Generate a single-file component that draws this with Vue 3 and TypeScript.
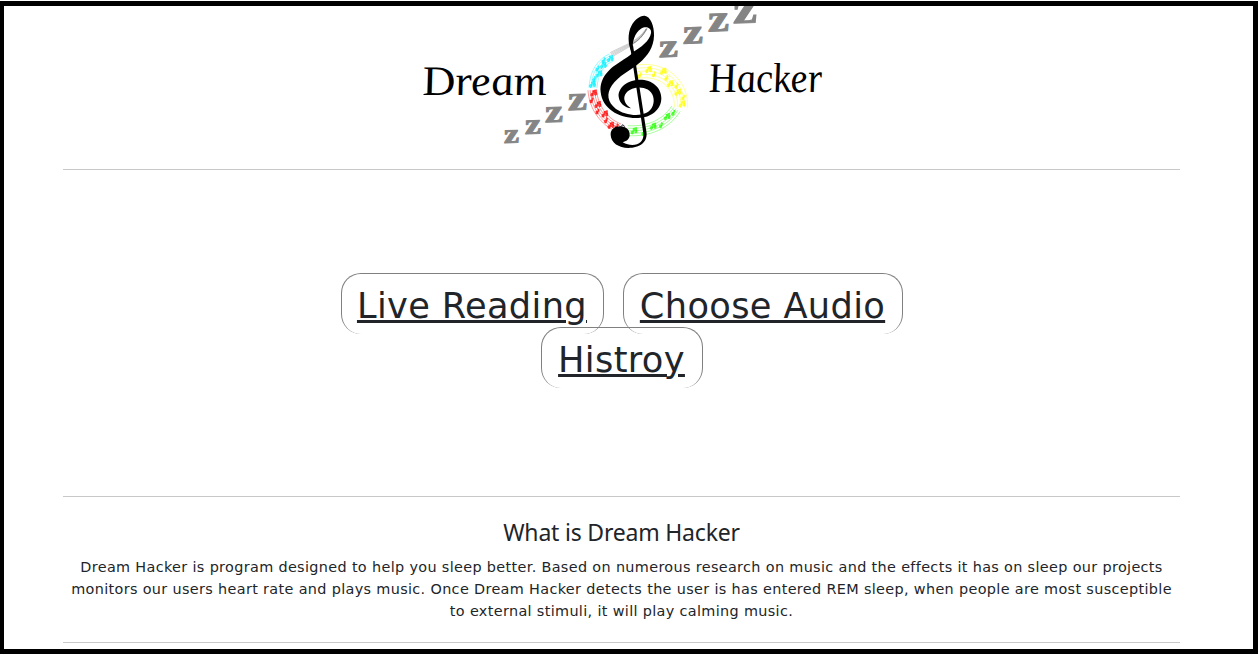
<script setup lang="ts">
interface Band {
  color: string
  curve: number[]
  spread: number
  notes: number
}

const bands: Band[] = [
  { color: '#888', curve: [230, 86, 205, 128, 165, 140, 124, 164], spread: 7, notes: 0 },
  { color: '#00f0ff', curve: [124, 172, 92, 188, 72, 215, 69, 264], spread: 12, notes: 7 },
  { color: '#f00', curve: [67, 270, 70, 320, 100, 365, 148, 384], spread: 13, notes: 8 },
  { color: '#2f0', curve: [172, 392, 240, 396, 290, 370, 318, 326], spread: 15, notes: 6 },
  { color: '#ff0', curve: [333, 322, 336, 255, 280, 200, 196, 216], spread: 20, notes: 10 },
]

function place(c: number[], t: number, offset: number): [number, number] {
  const u = 1 - t
  const at = (i: number) =>
    u * u * u * c[i] + 3 * u * u * t * c[i + 2] + 3 * u * t * t * c[i + 4] + t * t * t * c[i + 6]
  const slope = (i: number) =>
    u * u * (c[i + 2] - c[i]) + 2 * u * t * (c[i + 4] - c[i + 2]) + t * t * (c[i + 6] - c[i + 4])
  const dx = slope(0)
  const dy = slope(1)
  const len = Math.hypot(dx, dy)
  return [at(0) - (dy / len) * offset, at(1) + (dx / len) * offset]
}

function staff(b: Band, k: number): string {
  const pts: string[] = []
  for (let i = 0; i <= 16; i++) {
    const grow = b.notes ? 1 : 0.2 + (0.8 * i) / 16
    const [x, y] = place(b.curve, i / 16, k * (b.spread / 2) * grow)
    pts.push(x.toFixed(1) + ' ' + y.toFixed(1))
  }
  return 'M' + pts.join('L')
}

function note(b: Band, n: number): string {
  const [x, y] = place(b.curve, (n - 0.5) / b.notes, (((n * 7) % 5) - 2) * b.spread * 0.25)
  const head = (hx: number, hy: number) => `M${hx - 3} ${hy}a3.5 3 0 1 1 6 0a3.5 3 0 1 1 -6 0`
  const single = `${head(x - 2, y + 5)}M${x + 1} ${y + 5}v-12l5 5`
  return n % 2 ? `${single}M${x + 1} ${y - 7}l10 -3v12${head(x + 9, y + 2)}` : single
}

const lines = [-2, -1, 0, 1, 2]

const snores = [
  { x: 504, y: 143, w: 15, size: 27 },
  { x: 525, y: 134, w: 16, size: 29 },
  { x: 545, y: 122.3, w: 18, size: 32 },
  { x: 568, y: 110.3, w: 19, size: 34 },
  { x: 659, y: 57.3, w: 19, size: 33 },
  { x: 683, y: 43.8, w: 20, size: 35 },
  { x: 708, y: 31.5, w: 21, size: 38 },
  { x: 733, y: 23.2, w: 24, size: 43 },
]

const actions = [
  [
    { label: 'Live Reading', cls: 'live' },
    { label: 'Choose Audio', cls: 'audio' },
  ],
  [{ label: 'Histroy', cls: 'history' }],
]

const about = [
  'Dream Hacker is program designed to help you sleep better. Based on numerous research on music and the effects it has on sleep our projects',
  'monitors our users heart rate and plays music. Once Dream Hacker detects the user is has entered REM sleep, when people are most susceptible',
  'to external stimuli, it will play calming music.',
]
</script>

<template>
  <div class="page">
    <header class="banner">
      <svg class="logo" viewBox="415 6 415 150" width="415" height="150">
        <g class="snore">
          <text
            v-for="(s, i) in snores"
            :key="i"
            :transform="`translate(${s.x} ${s.y}) skewY(-2)`"
            :font-size="s.size"
            :textLength="s.w"
            lengthAdjust="spacingAndGlyphs"
          >z</text>
        </g>
        <g transform="translate(570 0) scale(.33333)">
          <g v-for="b in bands" :key="b.color" fill="none" :stroke="b.color">
            <path v-for="k in lines" :key="k" :d="staff(b, k)" stroke-width="1.6" stroke-opacity=".75" />
            <path v-for="n in b.notes" :key="'n' + n" :d="note(b, n)" :fill="b.color" fill-opacity=".7" stroke-width="1.7" />
          </g>
          <path
            fill-rule="evenodd"
            d="M187 160C176 143 172 112 180 87C188 64 208 46 224 47C242 49 253 79 252 107C251 142 234 166 207 190C181 212 145 228 126 256C108 282 113 307 137 326C160 343 202 351 228 339C248 330 255 307 249 288C242 267 217 259 195 264C171 269 159 286 164 302C168 315 176 319 184 325C164 323 148 309 146 290C144 262 174 240 207 239C245 238 274 261 274 294C274 329 244 353 204 354C147 356 97 326 92 276C88 230 122 203 151 185C167 175 178 169 187 160ZM189 156C212 143 239 123 243 100C246 84 229 76 213 86C194 98 185 126 189 156Z"
          />
          <path d="M180 137L189 136L229 394C235 427 209 444 175 444C146 443 123 429 122 405C121 389 134 379 150 379C169 379 180 390 179 406C178 419 169 424 158 427C190 445 224 432 220 400Z" />
          <path d="M150 382L159 374L164 380" fill="none" stroke="#222" stroke-width="3" />
          <path d="M230 86C218 109 205 122 189 130" fill="none" stroke="#888" stroke-width="3" />
        </g>
        <g class="wordmark">
          <text transform="translate(424 95) skewX(9)" font-size="42" textLength="124" lengthAdjust="spacingAndGlyphs">Dream</text>
          <text transform="translate(710 92) skewX(7)" font-size="42" textLength="114" lengthAdjust="spacingAndGlyphs">Hacker</text>
        </g>
      </svg>
    </header>

    <nav class="actions">
      <div v-for="(row, r) in actions" :key="r" class="row">
        <a v-for="a in row" :key="a.label" class="action" :class="a.cls"><span>{{ a.label }}</span></a>
      </div>
    </nav>

    <section class="about">
      <h2>What is Dream Hacker</h2>
      <p>
        <span v-for="(line, i) in about" :key="i" class="line">{{ line }}</span>
      </p>
    </section>
  </div>
</template>

<style>
body {
  margin: 0;
  background: #fff;
}
</style>

<style scoped>
.page {
  box-sizing: border-box;
  width: 1258px;
  height: 653px;
  margin-top: 1px;
  padding: 0 73px 0 59px;
  border: solid #000;
  border-width: 5px 5px 5px 4px;
  overflow: hidden;
  color: #212529;
  background: #fff;
  font-family: Verdana, "DejaVu Sans", sans-serif;
}
.banner {
  box-sizing: border-box;
  height: 164px;
  border-bottom: 1px solid #c8c8c8;
  display: flex;
  justify-content: center;
  align-items: flex-start;
}
.logo {
  display: block;
  margin-left: 1px;
  flex: none;
  overflow: visible;
}
.snore {
  fill: #858585;
  stroke: #858585;
  stroke-width: 1px;
  font-family: "Liberation Serif", serif;
  font-weight: 700;
}
.wordmark {
  fill: #000;
  font-family: "Liberation Serif", serif;
  font-style: italic;
}
.actions {
  box-sizing: border-box;
  height: 327px;
  padding-top: 103px;
  border-bottom: 1px solid #c8c8c8;
}
.row {
  display: flex;
  justify-content: center;
  gap: 19px;
  height: 54px;
}
.action {
  box-sizing: border-box;
  height: 61px;
  border: 1px solid #808080;
  border-bottom: 0 solid #808080;
  border-radius: 20px;
  display: flex;
  justify-content: center;
  font-size: 35.2px;
  line-height: 63px;
  letter-spacing: 0.35px;
  white-space: nowrap;
  text-decoration: underline;
  text-decoration-thickness: 3px;
  text-underline-offset: 2px;
}
.live {
  width: 263px;
}
.audio {
  width: 280px;
}
.history {
  width: 162px;
}
.about {
  box-sizing: border-box;
  height: 146px;
  padding-top: 22px;
  border-bottom: 1px solid #c8c8c8;
  text-align: center;
}
h2 {
  margin: 0;
  font: 400 23px/26px "Noto Sans", sans-serif;
  letter-spacing: -0.2px;
}
p {
  margin: 11px 0 0;
  font-size: 14.4px;
  line-height: 22px;
  letter-spacing: 0.35px;
}
.line {
  display: block;
  white-space: nowrap;
}
</style>
